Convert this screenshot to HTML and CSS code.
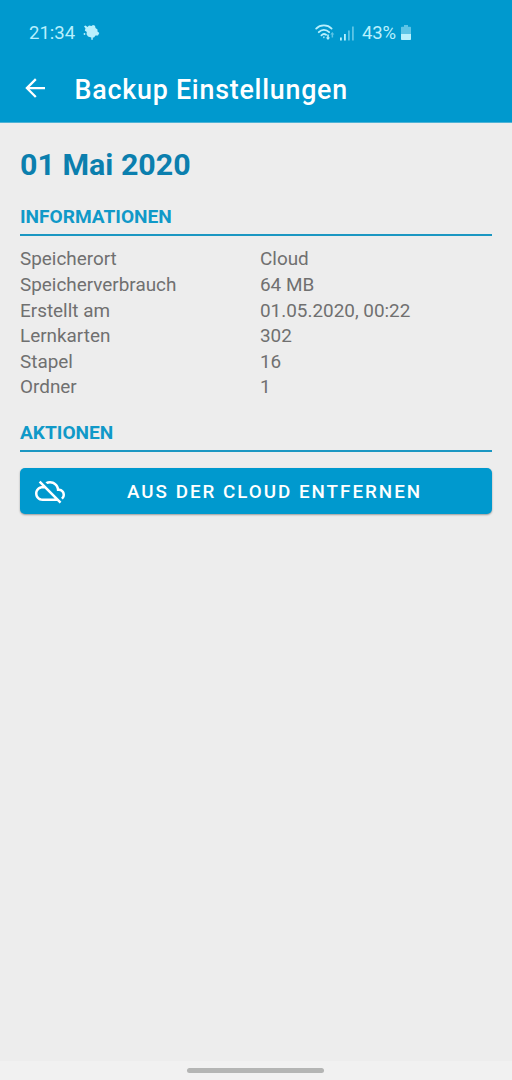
FILE: index.html
```html
<!DOCTYPE html>
<html lang="de">
<head>
<meta charset="utf-8">
<title>Backup Einstellungen</title>
<link rel="stylesheet" href="styles.css">
</head>
<body>
<div class="screen">
  <header class="header">
    <div class="status">
      <span class="clock">21:34</span>
      <svg class="leaf" width="17" height="17" viewBox="0 0 17 17"><path d="M1 2.200 2.500 1.500 4.500 3 6 1.500 8.500 2 10 1 12 1.800 12.500 4 14.500 5.500 14.500 7.500 16.300 9 15 11.500 12.500 11.500 11 13.500 9.800 13.500 9.800 15.800H8.300V13.500L5 12.500 3.500 10.200 3.800 8 1.800 6.500 2.500 4.500Z"/><circle cx="1.500" cy="10" r=".9"/></svg>
      <svg class="wifi" width="20" height="17" viewBox="0 0 20 17"><g fill="none" stroke="currentColor" stroke-width="1.800" stroke-linecap="round"><path d="M1.200 4.600C5.200 .4 12.600 .4 16.600 4.600M3.800 8.200c2.900-3.100 7.400-3.100 10.300 0M6.400 11.300c1.300-1.300 3.300-1.500 4.700-.5"/></g><path d="M7.900 13c.6-.6 1.300-.6 1.900 0l-.9 1.400ZM12.200 10.500h1.600v3h1.300L13 16l-2.200-2.500h1.400Z"/><path class="dim" d="M16.600 13.500v-3h-1.300l2-2.500 2 2.500h-1.200v3Z"/></svg>
      <svg class="signal" width="14" height="15" viewBox="0 0 14 15"><path d="M0 11.500h1.800v3H0ZM4 8h1.800v6.500H4Z"/><path class="dim" d="M8 4.500h1.800v10H8ZM12 .5h1.800v14H12Z"/></svg>
      <span class="percent">43%</span>
      <svg class="battery" width="10" height="16" viewBox="0 0 10 16"><path class="dim" d="M3 0h4v1.700h2.200q.8 0 .8.800V9H0V2.500q0-.8.800-.8H3Z"/><path d="M0 9h10v5.200q0 .8-.8.800H.8q-.8 0-.8-.8Z"/></svg>
    </div>
    <div class="toolbar">
      <svg class="back" width="30" height="30" viewBox="0 0 24 24"><path d="M20 11.100H7.700l5.600-5.600L12 4.200 4.200 12l7.800 7.800 1.300-1.300-5.600-5.600H20z"/></svg>
      <h1 class="title">Backup Einstellungen</h1>
    </div>
  </header>
  <main class="content">
    <h2 class="date"><span>01 Mai 2020</span></h2>
    <h3 class="section"><span>INFORMATIONEN</span></h3>
    <dl class="info">
      <dt>Speicherort</dt><dd>Cloud</dd>
      <dt>Speicherverbrauch</dt><dd>64 MB</dd>
      <dt>Erstellt am</dt><dd>01.05.2020, 00:22</dd>
      <dt>Lernkarten</dt><dd>302</dd>
      <dt>Stapel</dt><dd>16</dd>
      <dt>Ordner</dt><dd>1</dd>
    </dl>
    <h3 class="section"><span>AKTIONEN</span></h3>
    <button class="action" type="button">
      <svg class="cloud" width="30" height="30" viewBox="0 0 24 24"><path d="M24 15c0-2.640-2.050-4.780-4.650-4.960C18.670 6.590 15.640 4 12 4c-1.330 0-2.570.360-3.650.970l1.490 1.490C10.510 6.170 11.230 6 12 6c3.040 0 5.500 2.460 5.500 5.500v.5H19c1.660 0 3 1.340 3 3 0 .990-.480 1.850-1.210 2.400l1.410 1.410c1.090-.920 1.800-2.270 1.800-3.810zM4.410 3.860L3 5.270l2.770 2.770h-.420C2.340 8.360 0 10.910 0 14c0 3.310 2.690 6 6 6h11.730l2 2 1.410-1.410L4.410 3.860zM6 18c-2.210 0-4-1.790-4-4s1.790-4 4-4h1.730l8 8H6z"/></svg>
      <span class="label">AUS DER CLOUD ENTFERNEN</span>
    </button>
  </main>
  <footer class="navbar"><div class="handle"></div></footer>
</div>
</body>
</html>
```
FILE: styles.css
```css
* { box-sizing: border-box; }
body { margin: 0; background: #ededed; font-family: Roboto, "Liberation Sans", sans-serif; }
h1, h2, h3, dl, dd { margin: 0; }
svg { display: block; flex: none; fill: currentColor; }
.screen { display: flex; flex-direction: column; height: 1080px; }

.header { height: 123px; background: #0099ce; color: #fff; border-bottom: 1px solid #4fb3d6; }
.status { display: flex; height: 56px; padding: 10px 0 0 29px; align-items: center; color: #b9f0fd; font-size: 18.500px; line-height: 22px; }
.dim { opacity: .5; }
.leaf { margin: -2px 0 0 8px; }
.wifi { margin: -1px 0 0 215px; }
.signal { margin-left: 5px; }
.percent { margin-left: 8px; letter-spacing: -.2px; }
.battery { margin-left: 5px; }
.toolbar { display: flex; height: 66px; align-items: center; padding-left: 20px; }
.back { margin-top: -2px; }
.title { margin: 1px 0 0 24.500px; font-size: 26.800px; font-weight: 500; line-height: 32px; letter-spacing: .78px; }

.content { flex: 1; padding: 22px 20px 0; }
.date { height: 60px; color: #0b7fae; font-size: 30.400px; font-weight: 700; line-height: 39px; }
.section { height: 31px; border-bottom: 2px solid #1b97c2; color: #1099c8; font-size: 19.100px; font-weight: 700; line-height: 24px; }
.info { display: grid; grid-template-columns: 240px 1fr; grid-auto-rows: 25.600px; margin: 10.400px 0 20.600px; color: #707070; font-size: 18.900px; line-height: 25.600px; }
.action { display: flex; width: 100%; height: 46px; margin-top: 16px; padding: 0 15px; align-items: center; border: 0; border-radius: 5px; background: #0099ce; box-shadow: 0 1px 2px rgba(0, 0, 0, .35); color: #fff; font: 500 18.800px Roboto, "Liberation Sans", sans-serif; letter-spacing: 2px; }
.cloud { margin-top: 0; }
.label { margin: 2px 0 0 62px; white-space: nowrap; }

.navbar { height: 19px; padding-top: 7px; background: #f1f1f1; }
.handle { width: 137px; height: 5px; margin-left: 187px; border-radius: 3px; background: #b4b5b4; }
```
